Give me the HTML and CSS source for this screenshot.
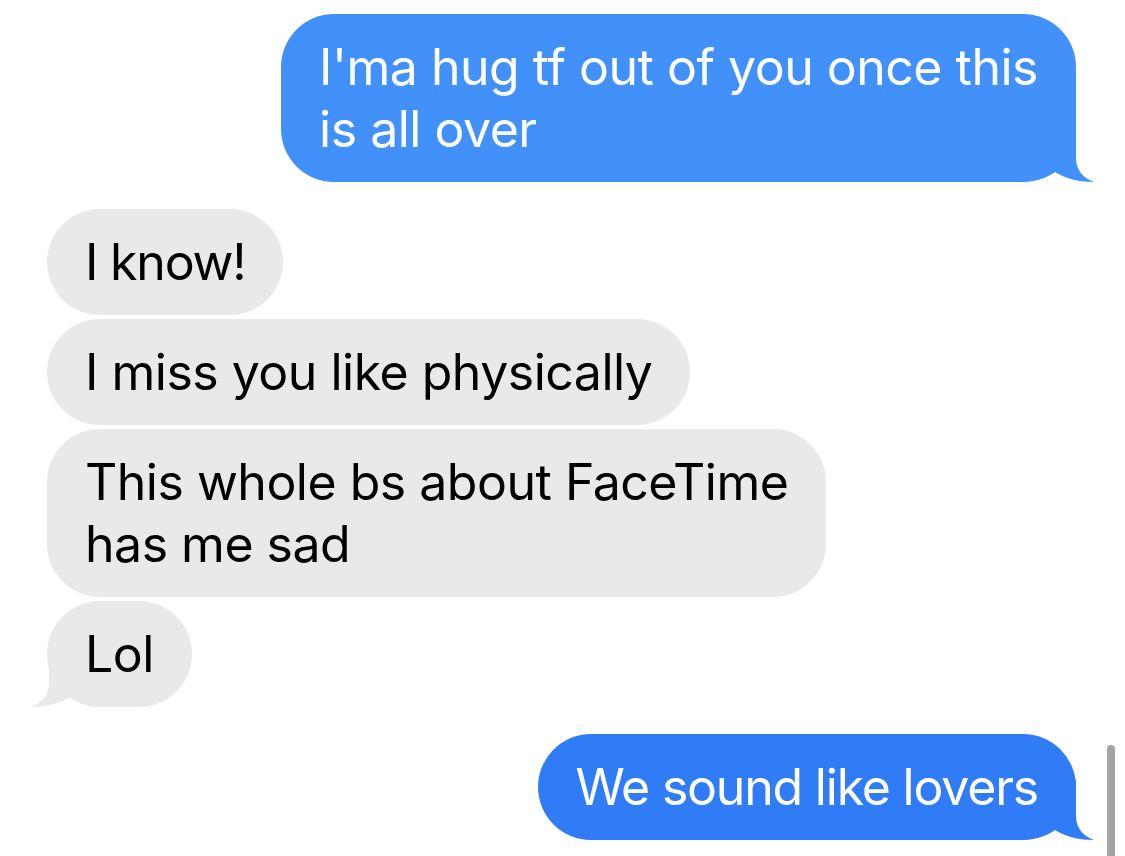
FILE: index.html
```html
<!DOCTYPE html>
<html>
<head>
<meta charset="utf-8">
<link rel="stylesheet" href="styles.css">
</head>
<body>
<div class="thread">
  <div class="row out">
    <div class="bubble sent first">I'ma hug tf out of you once this<br>is all over<svg class="tail tail-right" viewBox="0 0 80 60" width="80" height="60"><path d="M0,60 C18,60 32,57 41,50 C52,57 66,60 80,60 C69,56 62,48 62,36 L62,0 L0,0 Z"/></svg></div>
  </div>
  <div class="group in">
    <div class="bubble recv tight">I know!</div>
    <div class="bubble recv">I miss you like physically</div>
    <div class="bubble recv">This whole bs about FaceTime<br>has me sad</div>
    <div class="bubble recv">Lol<svg class="tail tail-left" viewBox="0 0 80 60" width="80" height="60"><path d="M0,60 C18,60 32,57 41,50 C52,57 66,60 80,60 C69,56 62,48 62,36 L62,0 L0,0 Z"/></svg></div>
  </div>
  <div class="row out">
    <div class="bubble sent last tight">We sound like lovers<svg class="tail tail-right" viewBox="0 0 80 60" width="80" height="60"><path d="M0,60 C18,60 32,57 41,50 C52,57 66,60 80,60 C69,56 62,48 62,36 L62,0 L0,0 Z"/></svg></div>
  </div>
</div>
<div class="scrollbar"></div>
</body>
</html>
```
FILE: styles.css
```css
html, body {
  margin: 0;
  padding: 0;
  background: #ffffff;
  width: 1125px;
  height: 856px;
  overflow: hidden;
}
body {
  font-family: Inter, "Liberation Sans", sans-serif;
  position: relative;
}
.thread {
  display: flex;
  flex-direction: column;
  gap: 27px;
  padding: 14px 49px 0 47px;
}
.row {
  display: flex;
}
.row.out {
  justify-content: flex-end;
}
.group {
  display: flex;
  flex-direction: column;
  align-items: flex-start;
  gap: 4px;
}
.bubble {
  position: relative;
  z-index: 0;
  font-size: 50px;
  line-height: 62px;
  padding: 22px 38px;
  border-radius: 53px;
  white-space: nowrap;
  letter-spacing: -0.5px;
}
.bubble.tight {
  letter-spacing: -1.2px;
}
.recv {
  background: #e9e9eb;
  color: #000000;
  fill: #e9e9eb;
}
.sent {
  color: #ffffff;
}
.sent.first {
  background: #4290f9;
  fill: #4290f9;
}
.sent.last {
  background: #307cf6;
  fill: #307cf6;
}
.tail {
  position: absolute;
  bottom: 0;
  display: block;
  z-index: -1;
}
.tail-right {
  right: -18px;
}
.tail-left {
  left: -16px;
  transform: scaleX(-1);
}
.scrollbar {
  position: absolute;
  left: 1107px;
  top: 745px;
  width: 8px;
  height: 120px;
  border-radius: 4px;
  background: #a4a4a4;
}
```
